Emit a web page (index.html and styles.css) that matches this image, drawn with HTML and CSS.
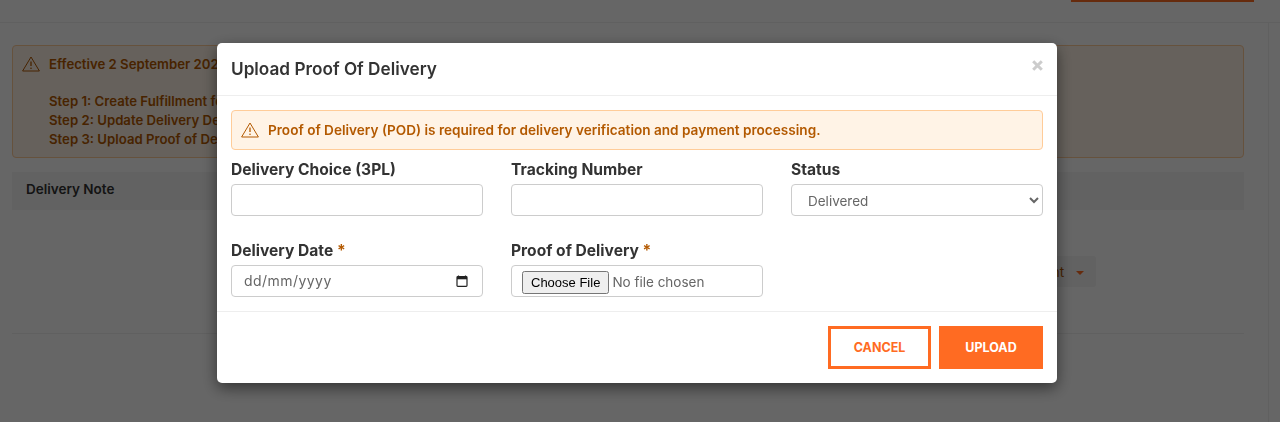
FILE: index.html
```html
<!DOCTYPE html>
<html lang="en">
<head>
    <meta charset="UTF-8">
    <meta name="viewport" content="width=device-width, initial-scale=1.0">
    <title>Upload Proof Of Delivery</title>
    <link rel="stylesheet" href="styles.css">
</head>
<body>
    <div class="topbar">
        <div class="topbar-tab"></div>
    </div>

    <main class="page">
        <div class="notice">
            <div class="notice-head">
                <svg class="warn-icon" viewBox="0 0 18 16"><path d="M9 1 L17.4 15 H0.6 Z" fill="none" stroke="currentColor" stroke-width="1" stroke-linejoin="round"/><path d="M9 5.6 V10" stroke="currentColor" stroke-width="1.3"/><circle cx="9" cy="12.2" r="0.8" fill="currentColor"/></svg>
                <span>Effective 2 September 2025</span>
            </div>
            <div class="notice-steps">
                <div>Step 1: Create Fulfillment for order</div>
                <div>Step 2: Update Delivery Details</div>
                <div>Step 3: Upload Proof of Delivery</div>
            </div>
        </div>

        <div class="table-head">
            <span>Delivery Note</span>
        </div>

        <div class="table-row">
            <button class="action-btn">Shipment <span class="caret"></span></button>
        </div>
    </main>

    <div class="backdrop"></div>

    <div class="modal">
        <div class="modal-header">
            <h2>Upload Proof Of Delivery</h2>
            <svg class="close" viewBox="0 0 11 11"><path d="M1.2 1.2 L9.8 9.8 M9.8 1.2 L1.2 9.8" stroke="#cccccc" stroke-width="3"/></svg>
        </div>
        <div class="modal-body">
            <div class="alert">
                <svg class="warn-icon" viewBox="0 0 18 16"><path d="M9 1 L17.4 15 H0.6 Z" fill="none" stroke="currentColor" stroke-width="1" stroke-linejoin="round"/><path d="M9 5.6 V10" stroke="currentColor" stroke-width="1.3"/><circle cx="9" cy="12.2" r="0.8" fill="currentColor"/></svg>
                <span>Proof of Delivery (POD) is required for delivery verification and payment processing.</span>
            </div>
            <div class="form-grid">
                <div class="field">
                    <label>Delivery Choice (3PL)</label>
                    <input class="control" type="text">
                </div>
                <div class="field">
                    <label>Tracking Number</label>
                    <input class="control" type="text">
                </div>
                <div class="field">
                    <label>Status</label>
                    <select class="control status-control">
                        <option>Delivered</option>
                    </select>
                </div>
                <div class="field">
                    <label>Delivery Date <span class="req">*</span></label>
                    <div class="control date-control">
                        <span>dd/mm/yyyy</span>
                        <svg class="calendar" viewBox="0 0 12 12"><path d="M2.5 0.5 V2 M9.5 0.5 V2" stroke="#222" stroke-width="1.2"/><rect x="1" y="1.7" width="10" height="9.6" rx="0.8" fill="none" stroke="#222" stroke-width="1.2"/><rect x="1" y="1.7" width="10" height="2.6" fill="#222"/></svg>
                    </div>
                </div>
                <div class="field">
                    <label>Proof of Delivery <span class="req">*</span></label>
                    <input class="control file-control" type="file">
                </div>
            </div>
        </div>
        <div class="modal-footer">
            <button class="btn btn-outline">CANCEL</button>
            <button class="btn btn-solid">UPLOAD</button>
        </div>
    </div>
</body>
</html>
```

FILE: styles.css
```css
* {
    box-sizing: border-box;
}

html, body {
    height: 100%;
}

body {
    margin: 0;
    background-color: #ffffff;
    color: #333;
    font-family: Inter, "Noto Sans", sans-serif;
    font-size: 14px;
    overflow: hidden;
}

.topbar {
    height: 23px;
    border-bottom: 1px solid #f0f0f0;
    display: flex;
    justify-content: flex-end;
    padding-right: 26px;
}

.topbar-tab {
    width: 183px;
    height: 2px;
    background-color: #ff6b22;
}

.page {
    width: 1269px;
    height: 399px;
    border-right: 1px solid #f0f0f0;
    padding: 22px 24px 0 12px;
}

.notice {
    height: 113px;
    background-color: #fff3e6;
    border: 1px solid #ffcc99;
    border-radius: 4px;
    color: #b35900;
    font-weight: 600;
    font-size: 13.2px;
    padding: 10px 9px 0 9px;
}

.notice-head {
    display: flex;
    align-items: center;
    gap: 9px;
}

.notice-steps {
    margin: 20px 0 0 27px;
    line-height: 19px;
}

.warn-icon {
    width: 18px;
    height: 16px;
    flex: none;
}

.table-head {
    height: 38px;
    margin-top: 14px;
    background-color: #f5f5f5;
    padding: 0 14px 4px;
    display: flex;
    align-items: center;
    font-weight: 600;
    font-size: 13.5px;
}

.table-row {
    height: 124px;
    border-bottom: 1px solid #f0f0f0;
    padding: 46px 148px 0 0;
    display: flex;
    justify-content: flex-end;
    align-items: flex-start;
}

.action-btn {
    height: 31px;
    padding: 0 12px;
    background-color: #f5f5f5;
    border: 0;
    border-radius: 3px;
    color: #b35900;
    font-family: inherit;
    font-size: 13.5px;
}

.caret {
    display: inline-block;
    margin-left: 8px;
    vertical-align: middle;
    border-left: 4px solid transparent;
    border-right: 4px solid transparent;
    border-top: 4px solid #ff6b22;
}

.backdrop {
    position: fixed;
    inset: 0;
    background-color: rgba(0, 0, 0, 0.6);
}

.modal {
    position: fixed;
    left: 217px;
    top: 43px;
    width: 840px;
    height: 340px;
    background-color: #fff;
    border-radius: 5px;
    box-shadow: 0 5px 15px rgba(0, 0, 0, 0.5);
    display: flex;
    flex-direction: column;
}

.modal-header {
    height: 53px;
    flex: none;
    padding: 0 14px;
    border-bottom: 1px solid #eee;
    display: flex;
    align-items: center;
    justify-content: space-between;
}

.modal-header h2 {
    margin: 0 0 1px;
    font-size: 17.2px;
    font-weight: 600;
    color: #333;
}

.close {
    width: 11px;
    height: 11px;
    margin-top: -7px;
}

.modal-body {
    flex: 1;
    padding: 14px 14px 0;
}

.alert {
    height: 40px;
    background-color: #fff3e6;
    border: 1px solid #ffcc99;
    border-radius: 4px;
    color: #b35900;
    font-weight: 600;
    font-size: 13.6px;
    padding: 0 9px;
    display: flex;
    align-items: center;
    gap: 9px;
}

.form-grid {
    display: grid;
    grid-template-columns: repeat(3, 252px);
    column-gap: 28px;
    row-gap: 25px;
    margin-top: 10px;
}

label {
    display: block;
    font-size: 15.6px;
    font-weight: 700;
    line-height: 20px;
    margin-bottom: 4px;
    color: #333;
}

.req {
    color: #b35900;
}

.control {
    display: block;
    width: 100%;
    height: 32px;
    background-color: #fff;
    border: 1px solid #ccc;
    border-radius: 4px;
    padding: 0 12px;
    color: #666;
    font-family: inherit;
    font-size: 13.5px;
}

.status-control {
    padding-top: 2px;
}

.date-control {
    display: flex;
    align-items: center;
    justify-content: space-between;
    padding-right: 14px;
    padding-bottom: 1px;
    font-size: 14px;
    letter-spacing: 0.45px;
}

.calendar {
    width: 12px;
    height: 12px;
}

.file-control {
    padding: 5px 10px;
}

.file-control::file-selector-button {
    font-family: "Liberation Sans", sans-serif;
    font-size: 13px;
    margin-right: 3px;
    padding: 2px 7px;
}

.modal-footer {
    height: 72px;
    flex: none;
    border-top: 1px solid #eee;
    padding: 14px 14px 0;
    display: flex;
    justify-content: flex-end;
    align-items: flex-start;
    gap: 8px;
}

.btn {
    height: 43px;
    width: 103px;
    border: 3px solid #ff6b22;
    font-family: inherit;
    font-size: 12.5px;
    font-weight: 700;
}

.btn-outline {
    background-color: #fff;
    color: #ff6b22;
}

.btn-solid {
    width: 104px;
    background-color: #ff6b22;
    color: #fff;
}
```
